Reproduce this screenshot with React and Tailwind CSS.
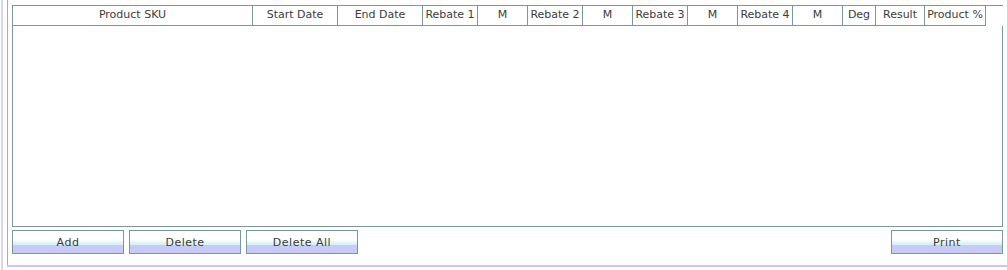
const columns = [
  { label: 'Product SKU', width: 'w-[240px]' },
  { label: 'Start Date', width: 'w-[85px]' },
  { label: 'End Date', width: 'w-[85px]' },
  { label: 'Rebate 1', width: 'w-[55px]' },
  { label: 'M', width: 'w-[50px]' },
  { label: 'Rebate 2', width: 'w-[55px]' },
  { label: 'M', width: 'w-[50px]' },
  { label: 'Rebate 3', width: 'w-[55px]' },
  { label: 'M', width: 'w-[50px]' },
  { label: 'Rebate 4', width: 'w-[55px]' },
  { label: 'M', width: 'w-[50px]' },
  { label: 'Deg', width: 'w-[33px]' },
  { label: 'Result', width: 'w-[49px]' },
  { label: 'Product %', width: 'w-[61px]' },
];

function SwingButton({ children }) {
  return (
    <button className="w-[112px] h-[24px] border border-[#7a979c] bg-[linear-gradient(to_bottom,#ffffff_0%,#ffffff_40%,#e2f6f9_52%,#d6f1f6_62%,#c8caf8_64%,#c8caf8_100%)] text-[#3c3c3c] tracking-[0.5px] leading-none">
      {children}
    </button>
  );
}

export default function App() {
  return (
    <div className="w-[1007px] h-[270px] bg-white flex font-['DejaVu_Sans',sans-serif] text-[11px] text-[#3c3c3c]">
      <div className="w-px" />
      <div className="w-[2px] bg-[#d6d6f2]" />
      <div className="w-[4px]" />
      <div className="flex-1 flex flex-col">
        <div className="flex flex-1">
          <div className="w-px bg-[#9fabd6]" />
          <div className="w-[4px]" />
          <div className="w-[991px] flex flex-col pt-[5px]">
            <div className="h-[222px] flex flex-col border-l border-t border-b border-[#7a979c]">
              <div className="flex h-[20px]">
                <div className="flex border-b border-[#7a979c]">
                  {columns.map((col, i) => (
                    <div
                      key={i}
                      className={`${col.width} h-full border-r border-[#7a979c] flex items-center justify-center whitespace-nowrap overflow-visible`}
                    >
                      {col.label}
                    </div>
                  ))}
                </div>
                <div className="flex-1" />
              </div>
              <div className="flex-1 border-r border-[#7a979c]" />
            </div>
            <div className="flex mt-[3px]">
              <div className="flex gap-[5px]">
                <SwingButton>Add</SwingButton>
                <SwingButton>Delete</SwingButton>
                <SwingButton>Delete All</SwingButton>
              </div>
              <div className="flex-1" />
              <SwingButton>Print</SwingButton>
            </div>
          </div>
        </div>
        <div className="h-[2px] bg-[#c8c8f2]" />
        <div className="h-[3px]" />
      </div>
    </div>
  );
}
